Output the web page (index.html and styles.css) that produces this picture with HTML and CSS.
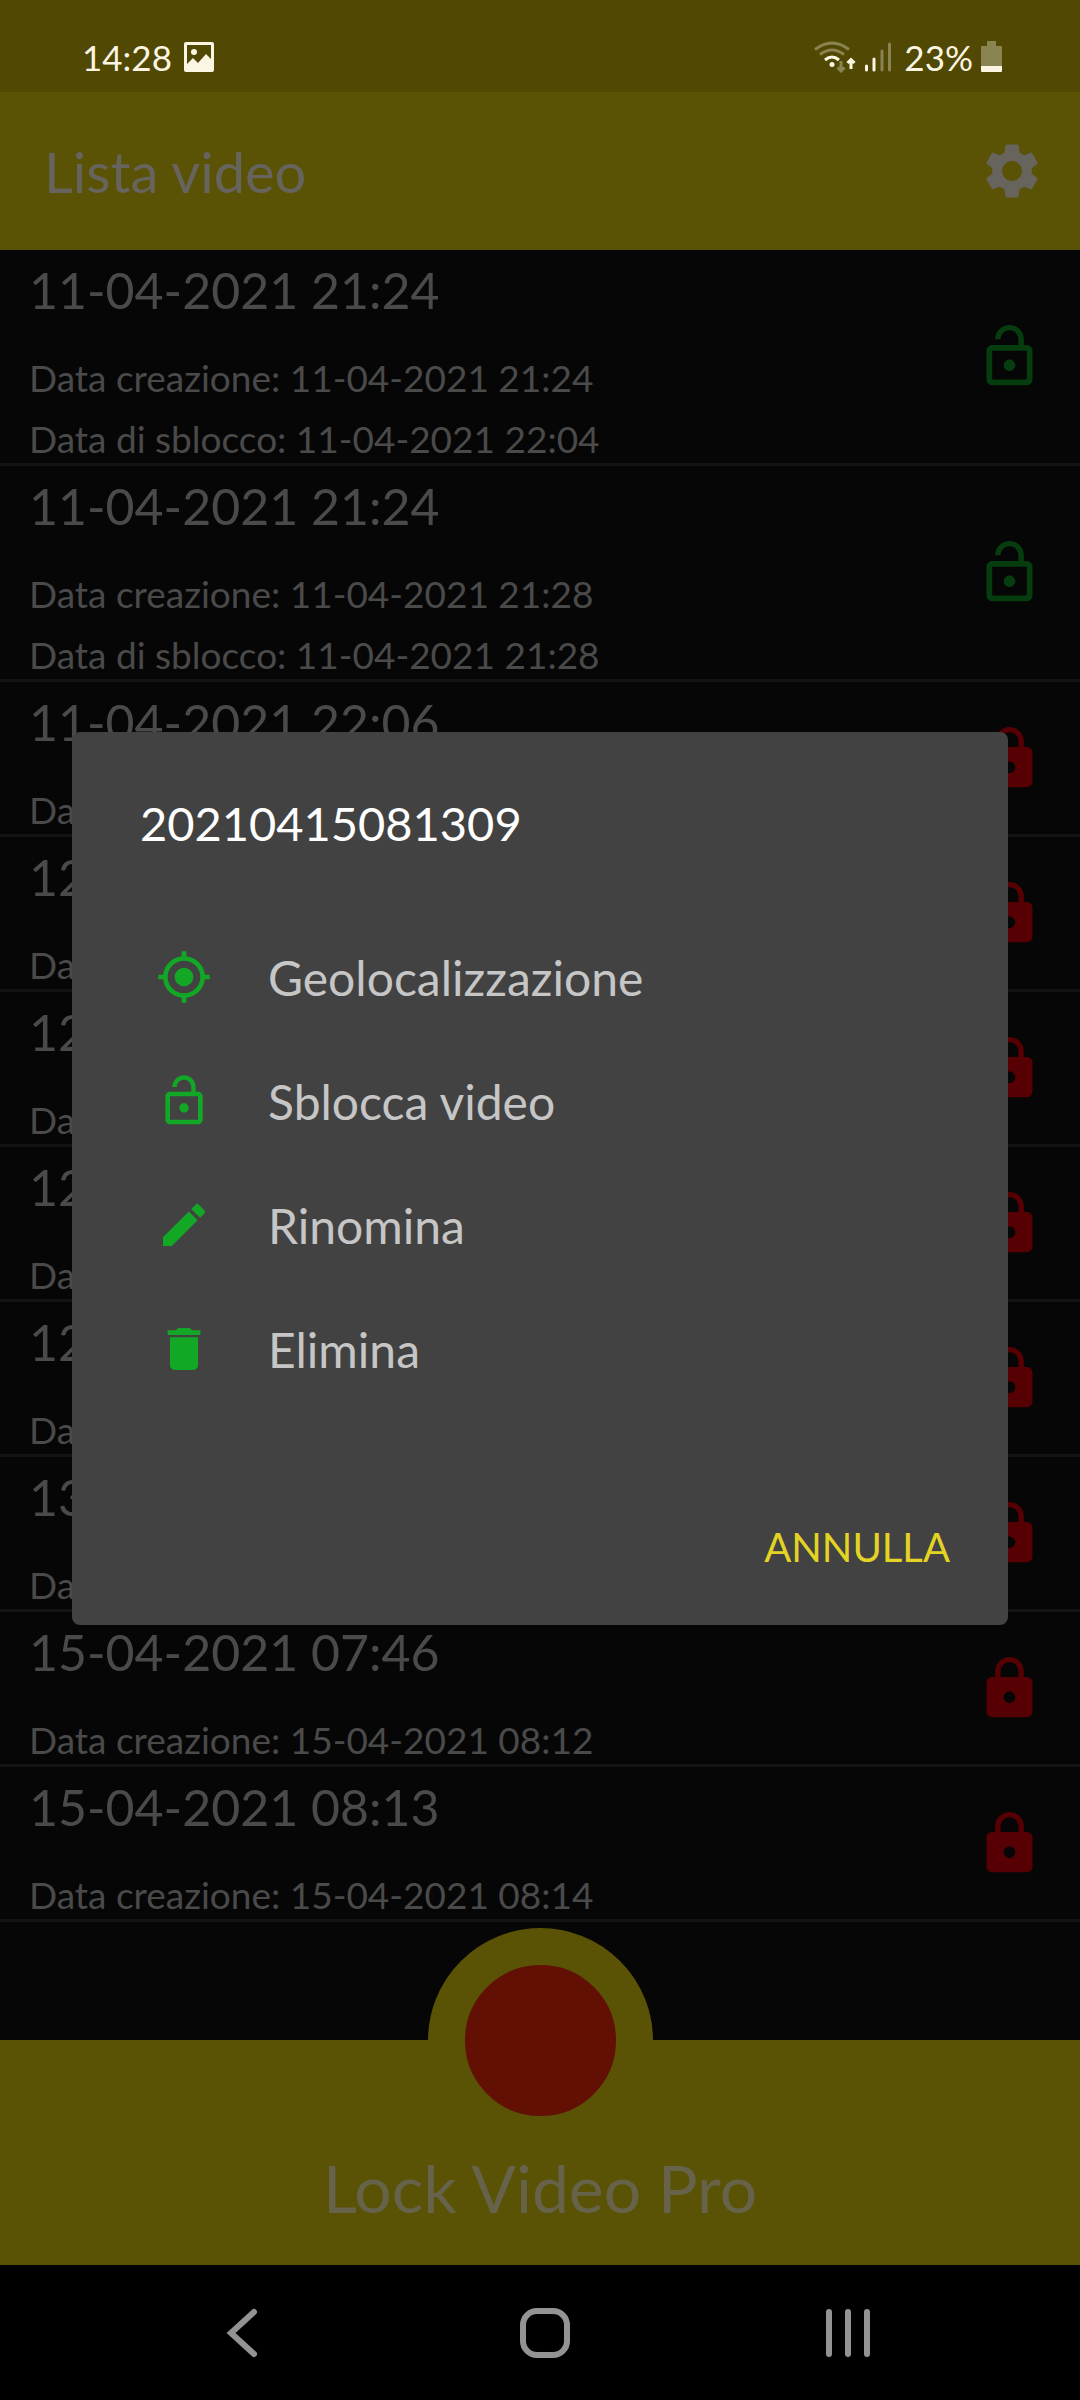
FILE: index.html
```html
<!DOCTYPE html>
<html lang="it">

<head>
    <meta charset="UTF-8">
    <meta name="viewport" content="width=device-width, initial-scale=1.0">
    <title>Lock Video Pro</title>
    <link rel="stylesheet" href="styles.css">
</head>

<body>
    <!-- shared icons -->
    <svg class="icon-defs" aria-hidden="true">
        <symbol id="lock-open" viewBox="0 0 24 24">
            <path d="M12 17c1.1 0 2-.9 2-2s-.9-2-2-2-2 .9-2 2 .9 2 2 2zm6-9h-1V6c0-2.76-2.24-5-5-5S7 3.24 7 6h1.9c0-1.71 1.39-3.1 3.1-3.1s3.1 1.39 3.1 3.1v2H6c-1.1 0-2 .9-2 2v10c0 1.1.9 2 2 2h12c1.1 0 2-.9 2-2V10c0-1.1-.9-2-2-2zm0 12H6V10h12v10z" />
        </symbol>
        <symbol id="lock" viewBox="0 0 24 24">
            <path d="M18 8h-1V6c0-2.76-2.24-5-5-5S7 3.24 7 6v2H6c-1.1 0-2 .9-2 2v10c0 1.1.9 2 2 2h12c1.1 0 2-.9 2-2V10c0-1.1-.9-2-2-2zm-6 9c-1.1 0-2-.9-2-2s.9-2 2-2 2 .9 2 2-.9 2-2 2zm3.1-9H8.9V6c0-1.71 1.39-3.1 3.1-3.1s3.1 1.39 3.1 3.1v2z" />
        </symbol>
    </svg>

    <div class="status-bar">
        <span class="status-time">14:28</span>
        <svg class="status-picture" viewBox="0 0 30 30">
            <path fill-rule="evenodd" d="M2 0h26a2 2 0 0 1 2 2v26a2 2 0 0 1-2 2H2a2 2 0 0 1-2-2V2a2 2 0 0 1 2-2zM3 3v19l6-6 5 5 8-9 5 5V3zM10 7a3 3 0 1 1 0 6a3 3 0 0 1 0-6z" />
        </svg>
        <svg class="status-wifi" viewBox="0 0 42 32">
            <g fill="none" stroke="#8a8452" stroke-width="3">
                <path d="M1 8.500q17-13 34 0" />
                <path d="M6 13.500q12-9 24 0" />
                <path d="M27 20v10M23.500 26.500L27 30l3.500-3.500" />
            </g>
            <g fill="none" stroke="#fbf6e3" stroke-width="3">
                <path d="M11 19q7-6 14 0" />
                <path d="M37 28V18M33.500 22L37 18.500l3.500 3.500" />
            </g>
            <circle cx="18" cy="23.500" r="2.500" />
        </svg>
        <svg class="status-signal" viewBox="0 0 28 30">
            <path fill="none" stroke="#fbf6e3" stroke-width="3" stroke-linecap="round" d="M2.500 24v4M10 17v11" />
            <path fill="none" stroke="#8a8452" stroke-width="3" stroke-linecap="round" d="M18 9v19M25.500 2v26" />
        </svg>
        <span>23%</span>
        <svg class="status-battery" viewBox="0 0 21 32">
            <path fill="#8a8452" d="M6 0h9v5h5a1 1 0 0 1 1 1v19H0V6a1 1 0 0 1 1-1h5z" />
            <path d="M0 25h21v5a1 1 0 0 1-1 1H1a1 1 0 0 1-1-1z" />
        </svg>
    </div>

    <div class="app">
        <header class="app-header">
            <h1 class="app-title">Lista video</h1>
            <button class="settings" type="button" aria-label="Impostazioni">
                <svg viewBox="0 0 24 24">
                    <path d="M19.140 12.940c.04-.3.060-.61.060-.94 0-.32-.02-.64-.070-.94l2.030-1.580c.18-.14.23-.41.120-.61l-1.920-3.320c-.12-.22-.37-.29-.59-.22l-2.390.96c-.5-.38-1.030-.7-1.620-.94l-.36-2.540c-.04-.24-.24-.41-.48-.41h-3.840c-.24 0-.43.17-.47.41l-.36 2.540c-.59.24-1.130.57-1.620.94l-2.390-.96c-.22-.08-.47 0-.59.22L2.740 8.870c-.12.21-.08.47.120.61l2.030 1.580c-.05.3-.09.63-.09.94s.02.64.070.94l-2.030 1.580c-.18.14-.23.41-.12.61l1.920 3.320c.12.22.37.29.59.22l2.390-.96c.5.38 1.030.7 1.620.94l.36 2.540c.05.24.24.41.48.41h3.840c.24 0 .44-.17.47-.41l.36-2.540c.59-.24 1.130-.56 1.620-.94l2.390.96c.22.08.47 0 .59-.22l1.920-3.320c.12-.22.070-.47-.12-.61l-2.010-1.580zM12 15.600c-1.980 0-3.600-1.620-3.600-3.600s1.620-3.600 3.600-3.600 3.600 1.620 3.600 3.600-1.620 3.600-3.600 3.600z" />
                </svg>
            </button>
        </header>

        <ul class="video-list">
            <li class="video-item unlocked">
                <div class="video-info">
                    <h2 class="video-name">11-04-2021 21:24</h2>
                    <p>Data creazione: 11-04-2021 21:24</p>
                    <p>Data di sblocco: 11-04-2021 22:04</p>
                </div>
                <svg class="video-lock"><use href="#lock-open" /></svg>
            </li>
            <li class="video-item unlocked">
                <div class="video-info">
                    <h2 class="video-name">11-04-2021 21:24</h2>
                    <p>Data creazione: 11-04-2021 21:28</p>
                    <p>Data di sblocco: 11-04-2021 21:28</p>
                </div>
                <svg class="video-lock"><use href="#lock-open" /></svg>
            </li>
            <li class="video-item">
                <div class="video-info">
                    <h2 class="video-name">11-04-2021 22:06</h2>
                    <p>Data creazione: 11-04-2021 22:06</p>
                </div>
                <svg class="video-lock"><use href="#lock" /></svg>
            </li>
            <li class="video-item">
                <div class="video-info">
                    <h2 class="video-name">12-04-2021 08:10</h2>
                    <p>Data creazione: 12-04-2021 08:10</p>
                </div>
                <svg class="video-lock"><use href="#lock" /></svg>
            </li>
            <li class="video-item">
                <div class="video-info">
                    <h2 class="video-name">12-04-2021 08:12</h2>
                    <p>Data creazione: 12-04-2021 08:12</p>
                </div>
                <svg class="video-lock"><use href="#lock" /></svg>
            </li>
            <li class="video-item">
                <div class="video-info">
                    <h2 class="video-name">12-04-2021 14:20</h2>
                    <p>Data creazione: 12-04-2021 14:20</p>
                </div>
                <svg class="video-lock"><use href="#lock" /></svg>
            </li>
            <li class="video-item">
                <div class="video-info">
                    <h2 class="video-name">12-04-2021 18:31</h2>
                    <p>Data creazione: 12-04-2021 18:31</p>
                </div>
                <svg class="video-lock"><use href="#lock" /></svg>
            </li>
            <li class="video-item">
                <div class="video-info">
                    <h2 class="video-name">13-04-2021 09:15</h2>
                    <p>Data creazione: 13-04-2021 09:15</p>
                </div>
                <svg class="video-lock"><use href="#lock" /></svg>
            </li>
            <li class="video-item">
                <div class="video-info">
                    <h2 class="video-name">15-04-2021 07:46</h2>
                    <p>Data creazione: 15-04-2021 08:12</p>
                </div>
                <svg class="video-lock"><use href="#lock" /></svg>
            </li>
            <li class="video-item">
                <div class="video-info">
                    <h2 class="video-name">15-04-2021 08:13</h2>
                    <p>Data creazione: 15-04-2021 08:14</p>
                </div>
                <svg class="video-lock"><use href="#lock" /></svg>
            </li>
        </ul>

        <footer class="app-footer">
            <button class="record" type="button" aria-label="Registra"></button>
            <p class="app-name">Lock Video Pro</p>
        </footer>

        <div class="overlay">
            <div class="dialog" role="dialog" aria-labelledby="dialog-title">
                <h2 class="dialog-title" id="dialog-title">20210415081309</h2>
                <div class="dialog-menu">
                    <button class="menu-item" type="button">
                        <svg viewBox="0 0 24 24">
                            <path fill-rule="evenodd" d="M20.940 11A8.990 8.990 0 0 0 13 3.060V1h-2v2.060A8.990 8.990 0 0 0 3.060 11H1v2h2.060A8.990 8.990 0 0 0 11 20.940V23h2v-2.060A8.990 8.990 0 0 0 20.940 13H23v-2zM12 19a7 7 0 1 1 0-14a7 7 0 0 1 0 14z" />
                            <circle cx="12" cy="12" r="4" />
                        </svg>
                        Geolocalizzazione
                    </button>
                    <button class="menu-item" type="button">
                        <svg><use href="#lock-open" /></svg>
                        Sblocca video
                    </button>
                    <button class="menu-item" type="button">
                        <svg viewBox="0 0 24 24">
                            <path d="M3 17.250V21h3.750L17.810 9.940l-3.750-3.750zM20.710 7.040a1 1 0 0 0 0-1.410l-2.340-2.340a1 1 0 0 0-1.410 0l-1.830 1.830 3.750 3.750z" />
                        </svg>
                        Rinomina
                    </button>
                    <button class="menu-item" type="button">
                        <svg viewBox="0 0 24 24">
                            <path d="M6 19c0 1.100.9 2 2 2h8c1.100 0 2-.9 2-2V7H6zM19 4h-3.500l-1-1h-5l-1 1H5v2h14z" />
                        </svg>
                        Elimina
                    </button>
                </div>
                <button class="dialog-cancel" type="button">ANNULLA</button>
            </div>
        </div>
    </div>

    <nav class="nav-bar">
        <button type="button" aria-label="Indietro">
            <svg viewBox="0 0 50 50"><path d="M37 4L14 25l23 21" /></svg>
        </button>
        <button type="button" aria-label="Home">
            <svg viewBox="0 0 50 50"><rect x="3" y="3" width="44" height="44" rx="14" /></svg>
        </button>
        <button type="button" aria-label="Recenti">
            <svg viewBox="0 0 50 50"><path d="M6 4v42M25 4v42M44 4v42" /></svg>
        </button>
    </nav>
</body>

</html>
```

FILE: styles.css
```css
* {
    margin: 0;
    padding: 0;
    box-sizing: border-box;
}

body {
    display: flex;
    flex-direction: column;
    min-height: 100vh;
    background: #060606;
    color: #4a4a4a;
    font-family: "Lato", sans-serif;
}

h1,
h2 {
    font-weight: 400;
}

ul {
    list-style: none;
}

button {
    border: none;
    background: none;
    color: inherit;
    font-family: inherit;
    cursor: pointer;
}

svg {
    display: block;
    flex: none;
    fill: currentColor;
}

.icon-defs {
    display: none;
}

/* status bar */
.status-bar {
    display: flex;
    align-items: center;
    height: 92px;
    padding: 22px 78px 0 82px;
    background: #514804;
    color: #fbf6e3;
    font-size: 35px;
}

.status-picture {
    width: 30px;
    height: 30px;
    margin-left: 12px;
}

.status-wifi {
    width: 42px;
    height: 32px;
    margin-left: auto;
}

.status-signal {
    width: 28px;
    height: 30px;
    margin: 0 12px 0 8px;
}

.status-battery {
    width: 21px;
    height: 32px;
    margin-left: 8px;
}

/* app */
.app {
    position: relative;
    display: flex;
    flex: 1;
    flex-direction: column;
}

.app-header {
    display: flex;
    align-items: center;
    justify-content: space-between;
    height: 158px;
    padding: 0 35px 0 44px;
    background: #5a5205;
    color: #66645c;
}

.app-title {
    font-size: 56px;
}

.settings svg {
    width: 66px;
    height: 66px;
}

.video-list {
    flex: 1;
}

.video-item {
    display: flex;
    align-items: center;
    justify-content: space-between;
    padding: 0 36px 0 29px;
    border-bottom: 3px solid #131313;
}

.video-info {
    padding-top: 4px;
    font-size: 37px;
    line-height: 48px;
}

.video-info p + p {
    margin-top: 13px;
}

.video-name {
    margin-bottom: 28px;
    font-size: 50px;
    line-height: 72px;
}

.video-lock {
    width: 69px;
    height: 69px;
    color: #560004;
}

.unlocked .video-lock {
    color: #063d0e;
}

/* footer with the record button */
.app-footer {
    display: flex;
    flex-direction: column;
    align-items: center;
    height: 225px;
    background: #5a5205;
}

.record {
    width: 225px;
    height: 225px;
    margin-top: -112px;
    border: 37px solid #5a5205;
    border-radius: 50%;
    background: #620f04;
}

.app-name {
    margin-top: -5px;
    color: #66634a;
    font-size: 66px;
    line-height: 80px;
}

/* dialog */
.overlay {
    position: absolute;
    inset: 0;
    display: flex;
    align-items: center;
    justify-content: center;
    padding: 0 72px;
}

.dialog {
    display: flex;
    flex: 1;
    flex-direction: column;
    padding: 56px 34px 30px 68px;
    border-radius: 8px;
    background: #424242;
}

.dialog-title {
    margin-bottom: 57px;
    color: #fff;
    font-size: 47px;
    line-height: 70px;
}

.dialog-menu {
    display: flex;
    flex-direction: column;
}

.menu-item {
    display: flex;
    align-items: center;
    gap: 56px;
    height: 124px;
    padding-left: 16px;
    color: #c6c6c6;
    font-size: 48px;
}

.menu-item svg {
    width: 56px;
    height: 56px;
    color: #12a825;
}

.dialog-cancel {
    align-self: flex-end;
    height: 96px;
    margin-top: 88px;
    padding: 0 24px;
    color: #e2d324;
    font-size: 40px;
}

/* navigation bar */
.nav-bar {
    display: flex;
    height: 135px;
    padding: 0 80px 0 90px;
    background: #000;
    color: #939393;
}

.nav-bar button {
    display: flex;
    flex: 1;
    align-items: center;
    justify-content: center;
}

.nav-bar svg {
    width: 50px;
    height: 50px;
    fill: none;
    stroke: currentColor;
    stroke-width: 6;
    stroke-linecap: round;
}
```
